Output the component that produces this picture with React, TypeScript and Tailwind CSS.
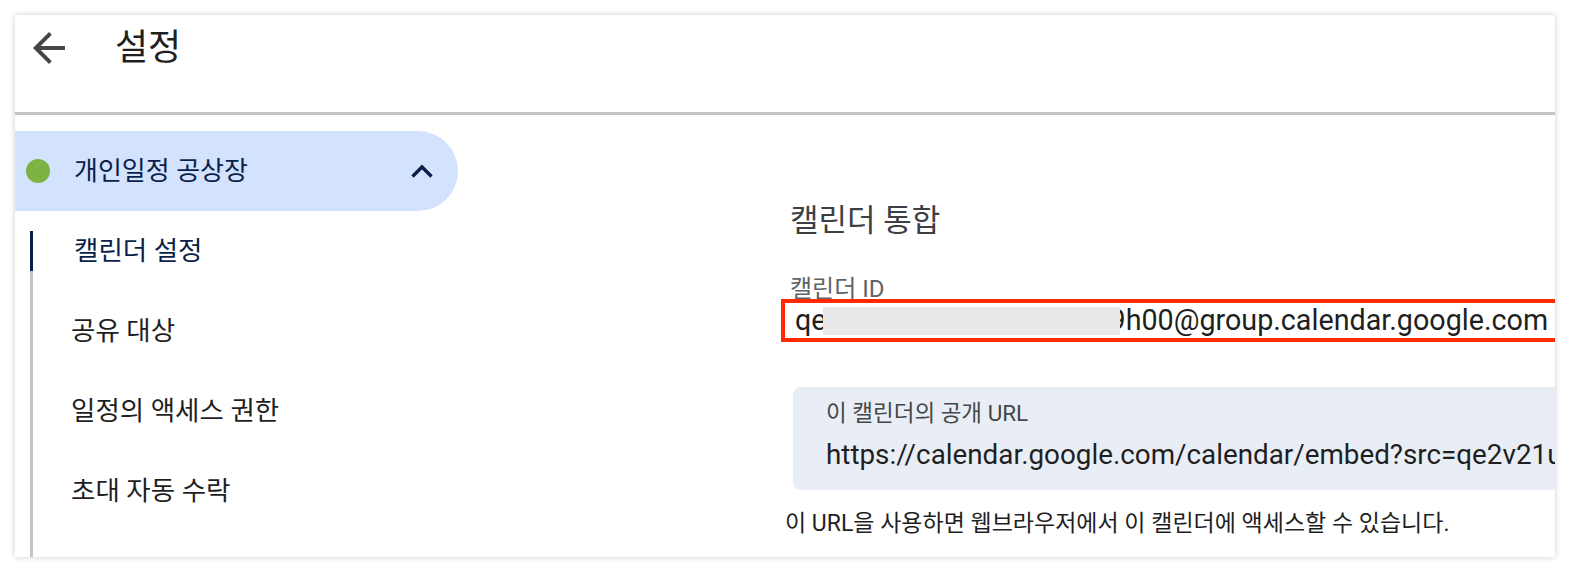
export default function App() {
  return (
    <div className="w-[1570px] h-[572px] bg-white pt-[15px] pl-[15px] font-['Roboto','Noto_Sans_CJK_KR',sans-serif]">
      <div className="w-[1540px] h-[542px] bg-white shadow-[0_0_6px_rgba(0,0,0,0.2)] overflow-hidden flex flex-col">
        <header className="h-[100px] shrink-0 border-b-[3px] border-[#c4c4c4]">
          <div className="h-[65px] flex items-center">
            <svg width="48" height="48" viewBox="0 0 24 24" className="ml-[10px] shrink-0">
              <path d="M20 11H7.83l5.59-5.59L12 4l-8 8 8 8 1.41-1.41L7.83 13H20v-2z" fill="#444746" />
            </svg>
            <span className="ml-[42px] text-[36px] leading-[40px] text-[#1f1f1f]">설정</span>
          </div>
        </header>
        <div className="flex flex-1 min-h-0">
          <aside className="w-[443px] shrink-0 pt-[16px] flex flex-col">
            <div className="h-[80px] rounded-r-full bg-[#d3e3fd] flex items-center shrink-0">
              <div className="ml-[11px] w-[24px] h-[24px] rounded-full bg-[#7cb342]" />
              <span className="ml-[24px] text-[26px] leading-[32px] text-[#0b1f4a]">개인일정 공상장</span>
              <svg width="24" height="18" viewBox="0 0 24 18" className="ml-auto mr-[24px]">
                <polyline points="2.5,14.5 12,5 21.5,14.5" fill="none" stroke="#0b1f4a" strokeWidth="3.4" />
              </svg>
            </div>
            <nav className="mt-[20px] ml-[15px] flex-1 border-l-[3px] border-[#c4c4c4] flex flex-col gap-[40px]">
              <div className="h-[40px] -ml-[3px] border-l-[3px] border-[#0b1f4a] pl-[41px] flex items-center text-[26.5px] text-[#0b1f4a]">캘린더 설정</div>
              <div className="h-[40px] pl-[38px] flex items-center text-[26.5px] text-[#1f1f1f]">공유 대상</div>
              <div className="h-[40px] pl-[38px] flex items-center text-[26.5px] text-[#1f1f1f]">일정의 액세스 권한</div>
              <div className="h-[40px] pl-[38px] flex items-center text-[26.5px] text-[#1f1f1f]">초대 자동 수락</div>
            </nav>
          </aside>
          <main className="flex-1 min-w-0 pl-[332px] pt-[88px] flex flex-col">
            <h2 className="text-[31px] leading-[36px] text-[#3c4043]">캘린더 통합</h2>
            <div className="mt-[39px] text-[24px] leading-[22px] text-[#5f6368]">캘린더 ID</div>
            <div className="mt-[-1px] ml-[-9px] w-[800px] h-[43px] shrink-0 border-4 border-[#ff2a00] flex items-center pl-[10px] whitespace-nowrap text-[28.7px] leading-[35px] text-[#1f1f1f]">
              <span>qe</span>
              <span className="relative z-10 ml-[-4px] w-[297px] h-[28px] shrink-0 bg-[#e9e9e9]" />
              <span className="ml-[-10px]">9h00@group.calendar.google.com</span>
            </div>
            <div className="mt-[45px] ml-[3px] w-[800px] h-[103px] shrink-0 rounded-l-[8px] bg-[#e9eef6] pl-[33px] pt-[13px]">
              <div className="text-[22.5px] leading-[26px] text-[#444746]">이 캘린더의 공개 URL</div>
              <div className="mt-[11px] text-[27.8px] leading-[36px] whitespace-nowrap text-[#1f1f1f]">https://calendar.google.com/calendar/embed?src=qe2v21u</div>
            </div>
            <div className="mt-[20px] ml-[-5px] text-[23px] leading-[28px] whitespace-nowrap text-[#1f1f1f]">이 URL을 사용하면 웹브라우저에서 이 캘린더에 액세스할 수 있습니다.</div>
          </main>
        </div>
      </div>
    </div>
  );
}
